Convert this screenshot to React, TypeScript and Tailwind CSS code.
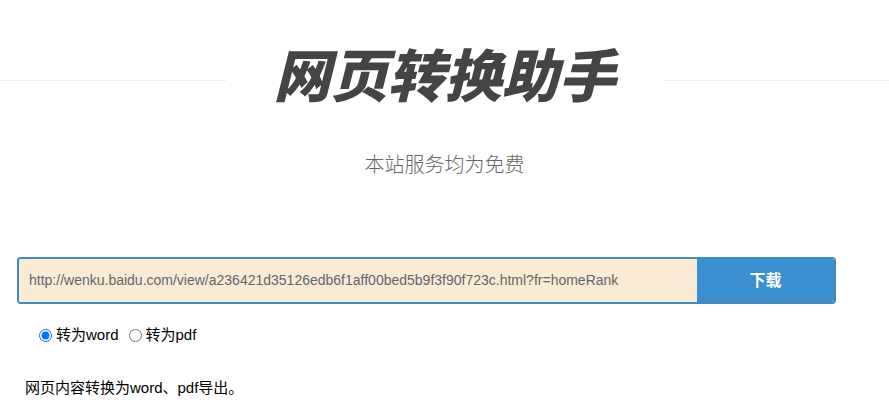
export default function App() {
  return (
    <div className="min-h-[412px] bg-white font-['Liberation_Sans','Noto_Sans_CJK_SC',sans-serif]">
      {/* Title with rule */}
      <div className="flex items-center pt-[38px]">
        <div className="flex-1 h-px bg-[#eeeeee]" />
        <h1 className="px-[48px] pb-[16px] text-[57px] leading-[68px] font-black italic text-[#444444] font-['Noto_Sans_CJK_SC',sans-serif]">
          网页转换助手
        </h1>
        <div className="flex-1 h-px bg-[#eeeeee]" />
      </div>

      <p className="mt-[28px] text-center text-[20px] leading-[28px] font-light text-[#666666] font-['Noto_Sans_CJK_SC',sans-serif]">
        本站服务均为免费
      </p>

      {/* URL input + download */}
      <div className="mt-[79px] ml-[17px] w-[819px] h-[47px] flex rounded-[4px] border-2 border-[#4189bf] overflow-hidden">
        <input
          readOnly
          value="http://wenku.baidu.com/view/a236421d35126edb6f1aff00bed5b9f3f90f723c.html?fr=homeRank"
          className="flex-1 min-w-0 bg-[#faebd7] px-[10px] text-[14px] text-[#666666] outline-none"
        />
        <button className="w-[137px] bg-[#3a8fd0] text-white text-[16px] font-bold">下载</button>
      </div>

      {/* Format choice */}
      <div className="mt-[21px] ml-[39px] flex items-center text-[15px] text-black leading-[20px]">
        <label className="flex items-center">
          <input type="radio" name="fmt" defaultChecked className="w-[13px] h-[13px] m-0 mr-[4px] accent-[#0075ff]" />
          转为word
        </label>
        <label className="flex items-center ml-[10px]">
          <input type="radio" name="fmt" className="w-[13px] h-[13px] m-0 mr-[4px]" />
          转为pdf
        </label>
      </div>

      <p className="mt-[33px] ml-[25px] text-[15px] leading-[20px] text-black">网页内容转换为word、pdf导出。</p>
    </div>
  );
}
